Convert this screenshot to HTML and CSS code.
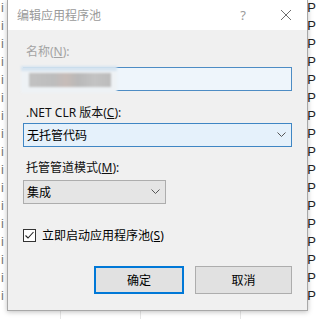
FILE: index.html
```html
<!DOCTYPE html>
<html>
<head>
<meta charset="utf-8">
<link rel="stylesheet" href="styles.css">
</head>
<body>
<div class="backdrop">
  <div class="row"><span class="c1">i</span><span class="c4">P</span></div>
  <div class="row"><span class="c1">i</span><span class="c4">P</span></div>
  <div class="row"><span class="c1">i</span><span class="c4">P</span></div>
  <div class="row"><span class="c1">i</span><span class="c4">P</span></div>
  <div class="row"><span class="c1">i</span><span class="c4">P</span></div>
  <div class="row"><span class="c1">i</span><span class="c4">P</span></div>
  <div class="row"><span class="c1">i</span><span class="c4">P</span></div>
  <div class="row"><span class="c1">i</span><span class="c4">P</span></div>
  <div class="row"><span class="c1">i</span><span class="c4">P</span></div>
  <div class="row"><span class="c1">i</span><span class="c4">P</span></div>
  <div class="row"><span class="c1">i</span><span class="c4">P</span></div>
  <div class="row"><span class="c1">i</span><span class="c4">P</span></div>
  <div class="row"><span class="c1">i</span><span class="c4">P</span></div>
  <div class="row"><span class="c1">i</span><span class="c4">P</span></div>
  <div class="row"><span class="c1">i</span><span class="c4">P</span></div>
  <div class="row"><span class="c1">i</span><span class="c4">P</span></div>
  <div class="row"><span class="c1">i</span><span class="c4">P</span></div>
  <div class="row"><span class="c1"></span><span class="c4"></span></div>
</div>

<div class="dialog">
  <div class="titlebar">
    <span class="title">编辑应用程序池</span>
    <span class="help">?</span>
    <svg class="close" width="12" height="12" viewBox="0 0 12 12"><path d="M1 1L11 11M11 1L1 11" stroke="#6e6e6e" stroke-width="1" fill="none"/></svg>
  </div>
  <div class="body">
    <div class="label disabled">名称(<u>N</u>):</div>
    <div class="textbox">
      <div class="redact"><div class="redact-top"></div><div class="redact-block"></div></div>
    </div>

    <div class="label gap1">.NET CLR 版本(<u>C</u>):</div>
    <div class="select wide active">
      <span>无托管代码</span>
      <svg class="chev" width="9" height="6" viewBox="0 0 9 6"><path d="M0.5 0.5L4.5 4.5L8.5 0.5" stroke="#555" stroke-width="1" fill="none"/></svg>
    </div>

    <div class="label gap2">托管管道模式(<u>M</u>):</div>
    <div class="select narrow">
      <span>集成</span>
      <svg class="chev" width="9" height="6" viewBox="0 0 9 6"><path d="M0.5 0.5L4.5 4.5L8.5 0.5" stroke="#555" stroke-width="1" fill="none"/></svg>
    </div>

    <div class="check-row">
      <span class="checkbox"><svg width="11" height="11" viewBox="0 0 11 11"><path d="M1.5 5.5L4 8L9.5 2" stroke="#222" stroke-width="1.1" fill="none"/></svg></span>
      <span class="check-label">立即启动应用程序池(<u>S</u>)</span>
    </div>

    <div class="buttons">
      <div class="btn primary">确定</div>
      <div class="btn secondary">取消</div>
    </div>
  </div>
</div>
</body>
</html>
```

FILE: styles.css
```css
html, body {
  margin: 0;
  padding: 0;
}
body {
  width: 316px;
  height: 319px;
  overflow: hidden;
  background: #ffffff;
  font-family: "Noto Sans", "Noto Sans CJK SC", sans-serif;
  font-size: 12px;
  position: relative;
}
.backdrop {
  display: flex;
  flex-direction: column;
  margin-top: -2px;
}
.row {
  height: 18px;
  display: flex;
  align-items: center;
  position: relative;
  background:
    linear-gradient(#e6e6e6, #e6e6e6) 60px 0 / 1px 100% no-repeat,
    linear-gradient(#e6e6e6, #e6e6e6) 140px 0 / 1px 100% no-repeat,
    linear-gradient(#e6e6e6, #e6e6e6) 240px 0 / 1px 100% no-repeat;
}
.c1 {
  width: 310px;
  padding-left: 1px;
  font-family: "Liberation Sans", sans-serif;
  font-size: 13px;
  color: #777;
}
.c4 {
  font-family: "Liberation Sans", sans-serif;
  font-size: 13px;
  color: #222;
}

.dialog {
  position: absolute;
  left: 7px;
  top: 0;
  width: 299px;
  height: 310px;
  border: 1px solid #a8a8a8;
  border-top: none;
  background: #f0f0f0;
  box-shadow: 0 1px 5px rgba(0,0,0,0.25);
  display: flex;
  flex-direction: column;
}
.titlebar {
  height: 30px;
  background: #ffffff;
  display: flex;
  align-items: center;
  padding-left: 9px;
  padding-right: 15px;
}
.title {
  color: #9a9a9a;
  font-size: 12px;
  flex: 1;
}
.help {
  color: #9a9a9a;
  font-size: 13px;
  margin-right: 34px;
}
.close {
  display: block;
}
.body {
  padding: 14px 15px 0 15px;
  display: flex;
  flex-direction: column;
}
.label {
  height: 16px;
  line-height: 16px;
  padding-left: 3px;
  color: #111;
}
.label.disabled {
  color: #a3a3a3;
}
.textbox {
  margin-top: 7px;
  height: 22px;
  border: 1px solid #4d8cc4;
  background: #eef5fb;
  position: relative;
}
.redact {
  position: absolute;
  left: -3px;
  top: -2px;
  width: 96px;
  height: 27px;
  background: #eef2f5;
  filter: blur(1.2px);
  display: flex;
  flex-direction: column;
}
.redact-top {
  height: 5px;
  background: #d6e4f0;
}
.redact-block {
  margin: 2px 6px 0 8px;
  height: 14px;
  background: linear-gradient(90deg, #c2c2c2 0%, #bdbdbd 30%, #c7bcb8 45%, #b9b9b9 60%, #c3c3c3 80%, #bcbcbc 100%);
}
.gap1 {
  margin-top: 14px;
}
.gap2 {
  margin-top: 13px;
}
.select {
  height: 22px;
  margin-top: 2px;
  display: flex;
  align-items: center;
  justify-content: space-between;
  padding: 0 5px 0 3px;
  color: #000;
}
.select.active {
  background: #e5f1fb;
  border: 1px solid #3f86c4;
}
.select.narrow {
  width: 133px;
  margin-top: 4px;
  background: #e5e5e5;
  border: 1px solid #adadad;
}
.chev {
  display: block;
}
.check-row {
  margin-top: 24px;
  display: flex;
  align-items: center;
  height: 14px;
}
.checkbox {
  width: 11px;
  height: 11px;
  border: 1px solid #333;
  background: #ffffff;
  display: flex;
}
.check-label {
  margin-left: 6px;
  color: #000;
}
.buttons {
  margin-top: 24px;
  display: flex;
  justify-content: flex-end;
  gap: 11px;
}
.btn {
  height: 28px;
  box-sizing: border-box;
  display: flex;
  align-items: center;
  justify-content: center;
  background: #e1e1e1;
  color: #000;
}
.btn.primary {
  width: 90px;
  border: 2px solid #0078d7;
}
.btn.secondary {
  width: 97px;
  border: 1px solid #adadad;
}
```
